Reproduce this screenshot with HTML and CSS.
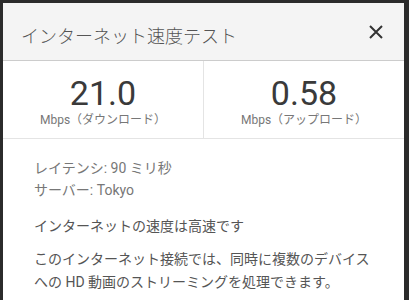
FILE: index.html
```html
<!DOCTYPE html>
<html>
<head>
	<meta charset="utf-8">
	<title>インターネット速度テスト</title>
	<link rel="stylesheet" href="styles.css">
</head>
<body>
	<div class="dialog">
		<div class="dHeader">
			<span class="dTitle">インターネット速度テスト</span>
			<span class="dClose">
				<svg width="14" height="14" viewBox="0 0 14 14"><path d="M1 1L13 13M13 1L1 13" stroke="#333" stroke-width="2" fill="none"/></svg>
			</span>
		</div>
		<div class="speeds">
			<div class="speed">
				<div class="num">21.0</div>
				<div class="unit">Mbps（ダウンロード）</div>
			</div>
			<div class="speed">
				<div class="num">0.58</div>
				<div class="unit">Mbps（アップロード）</div>
			</div>
		</div>
		<div class="info">
			<div class="meta">
				<div>レイテンシ: 90 ミリ秒</div>
				<div>サーバー: Tokyo</div>
			</div>
			<p class="verdict">インターネットの速度は高速です</p>
			<p class="desc">このインターネット接続では、同時に複数のデバイスへの HD 動画のストリーミングを処理できます。</p>
		</div>
	</div>
</body>
</html>
```
FILE: styles.css
```css
body,p{margin: 0;padding: 0}
body{
	background-color: #2b2b2b;
	font-family: Roboto, "Noto Sans CJK JP", sans-serif;
	padding: 3px 5px 0 3px;
	height: 300px;
	box-sizing: border-box;
	overflow: hidden;
}
.dialog{
	background-color: #fff;
	height: 297px;
}
.dHeader{
	height: 57px;
	background-color: #f4f4f4;
	border-bottom: 1px solid #ccc;
	display: flex;
	align-items: center;
	justify-content: space-between;
	padding: 0 21px 0 18px;
}
.dTitle{
	font-size: 18px;
	font-weight: 300;
	color: #555;
	padding-top: 6px;
}
.dClose{
	display: flex;
	padding-top: 1px;
}
.speeds{
	display: flex;
	border-bottom: 1px solid #e4e4e4;
	height: 77px;
}
.speed{
	flex: 1;
	text-align: center;
	padding-top: 14px;
}
.speed + .speed{
	border-left: 1px solid #e4e4e4;
}
.num{
	font-size: 34px;
	color: #3a3a3a;
	line-height: 36px;
}
.unit{
	font-size: 12px;
	color: #777;
	line-height: 18px;
}
.info{
	padding: 18px 30px 0 31px;
	font-size: 14px;
	color: #777;
	line-height: 22px;
}
.verdict{
	color: #555;
	margin-top: 14px;
}
.desc{
	color: #555;
	margin-top: 11px;
	line-height: 23px;
}
```
